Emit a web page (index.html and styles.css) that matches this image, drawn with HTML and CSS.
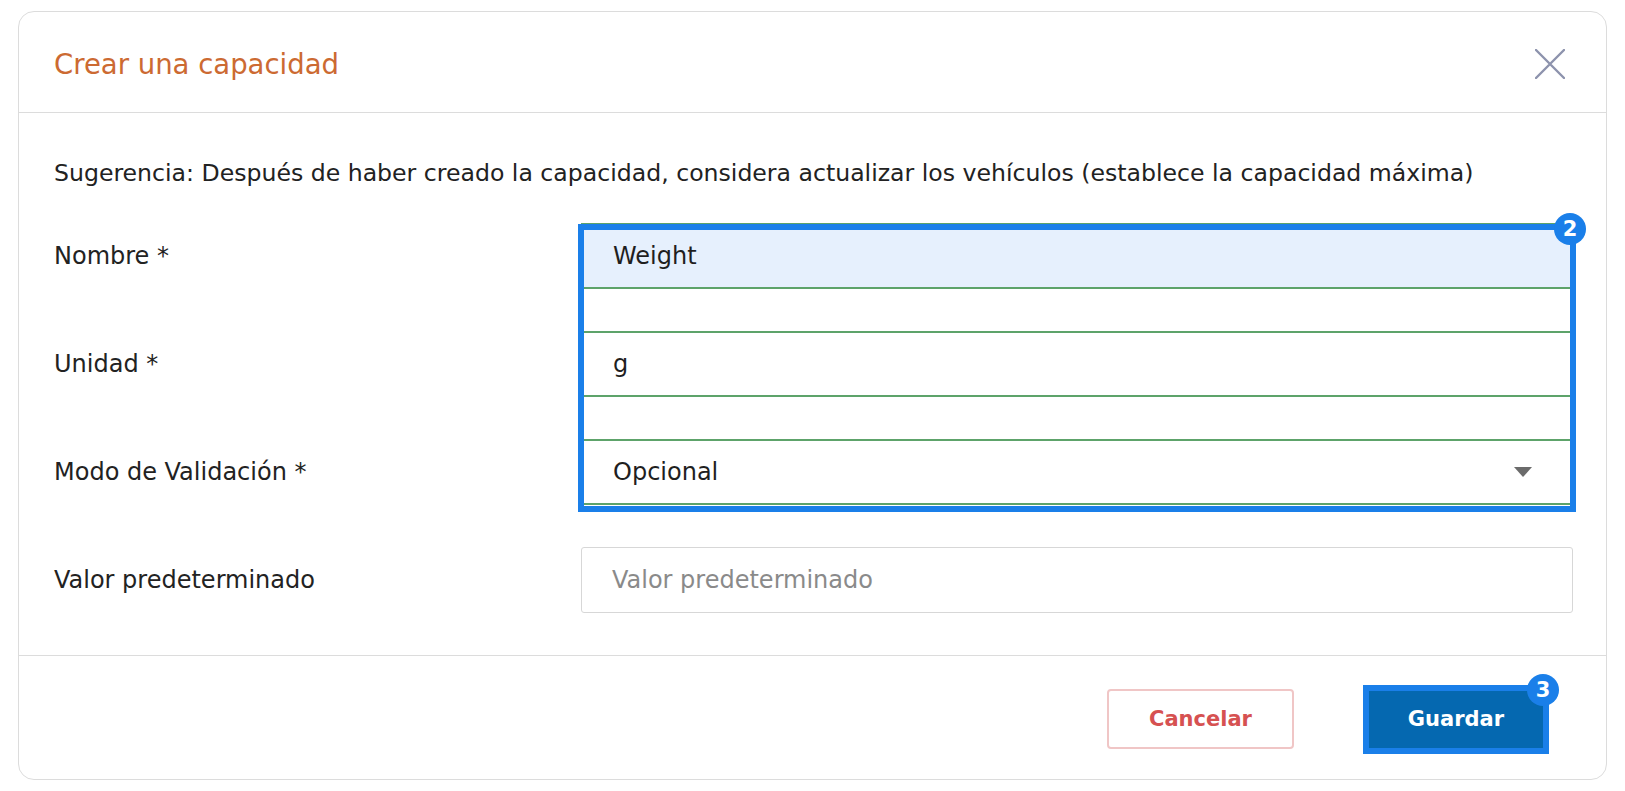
FILE: index.html
```html
<!DOCTYPE html>
<html lang="es">
<head>
<meta charset="utf-8">
<title>Crear una capacidad</title>
<link rel="stylesheet" href="styles.css">
</head>
<body>
<div class="page">
  <div class="dialog">
    <div class="dialog-header">
      <h2 class="dialog-title">Crear una capacidad</h2>
      <button class="close-btn" type="button" aria-label="Cerrar">
        <svg width="30" height="30" viewBox="0 0 30 30"><path d="M1 1 L29 29 M29 1 L1 29" stroke="#8d93ad" stroke-width="2.4" stroke-linecap="round" fill="none"/></svg>
      </button>
    </div>
    <div class="dialog-body">
      <p class="hint">Sugerencia: Después de haber creado la capacidad, considera actualizar los vehículos (establece la capacidad máxima)</p>
      <div class="form">
        <div class="labels">
          <div class="label">Nombre *</div>
          <div class="label">Unidad *</div>
          <div class="label">Modo de Validación *</div>
          <div class="label">Valor predeterminado</div>
        </div>
        <div class="controls">
          <div class="group">
            <div class="field field-filled">Weight</div>
            <div class="field">g</div>
            <div class="field field-select">
              <span>Opcional</span>
              <svg class="caret" width="18" height="10" viewBox="0 0 18 10"><path d="M0 0 L18 0 L9 10 Z" fill="#6b6b6b"/></svg>
            </div>
            <div class="annot annot-fields"><span class="badge">2</span></div>
          </div>
          <div class="field field-plain">Valor predeterminado</div>
        </div>
      </div>
    </div>
    <div class="dialog-footer">
      <button class="btn btn-cancel" type="button">Cancelar</button>
      <div class="btn-wrap">
        <button class="btn btn-save" type="button">Guardar</button>
        <div class="annot annot-btn"><span class="badge">3</span></div>
      </div>
    </div>
  </div>
</div>
</body>
</html>
```

FILE: styles.css
```css
* { box-sizing: border-box; }
html, body { margin: 0; padding: 0; background: #ffffff; }
body {
  font-family: "DejaVu Sans", "Liberation Sans", sans-serif;
  color: #222222;
}
.page { padding: 11px 18px 0 18px; }
.dialog {
  border: 1px solid #dcdcdc;
  border-radius: 16px;
  background: #ffffff;
}
.dialog-header {
  height: 101px;
  border-bottom: 1px solid #dcdcdc;
  display: flex;
  align-items: center;
  justify-content: space-between;
  padding: 3px 41px 0 35px;
}
.dialog-title {
  margin: 0;
  font-size: 27.5px;
  font-weight: normal;
  color: #cc6a32;
}
.close-btn {
  border: 0;
  background: none;
  padding: 0;
  width: 30px;
  height: 30px;
  display: flex;
}
.dialog-body { padding: 42px 33px 42px 35px; }
.hint {
  margin: 0 0 32px 0;
  font-size: 23.6px;
  line-height: 36px;
}
.form { display: grid; grid-template-columns: 527px 1fr; }
.labels { display: flex; flex-direction: column; gap: 42px; }
.label {
  height: 66px;
  display: flex;
  align-items: center;
  font-size: 24px;
}
.controls { display: flex; flex-direction: column; gap: 42px; }
.group { position: relative; display: flex; flex-direction: column; gap: 42px; }
.field {
  height: 66px;
  border: 2px solid #5da36a;
  display: flex;
  align-items: center;
  padding: 0 39px 0 30px;
  font-size: 24px;
  color: #1f1f1f;
  background: #ffffff;
}
.field-filled { background: #e6f0fd; }
.field-select { justify-content: space-between; }
.field-plain {
  border: 1.5px solid #d7d7d7;
  border-radius: 3px;
  color: #8a8a8a;
}
.annot {
  position: absolute;
  border: 6px solid #1a7fe9;
  pointer-events: none;
  z-index: 2;
}
.annot-fields { top: 1px; left: -3px; right: -3px; bottom: -7px; }
.annot-btn { top: -4px; left: -3px; right: -3px; bottom: -5px; }
.badge {
  position: absolute;
  top: -17px;
  right: -16px;
  width: 32px;
  height: 32px;
  border-radius: 50%;
  background: #1a7fe9;
  color: #ffffff;
  font-size: 21px;
  font-weight: bold;
  display: flex;
  align-items: center;
  justify-content: center;
}
.dialog-footer {
  border-top: 1px solid #dcdcdc;
  padding: 33px 60px 30px 0;
  display: flex;
  justify-content: flex-end;
  align-items: center;
  gap: 72px;
}
.btn {
  height: 60px;
  font-family: "DejaVu Sans", "Liberation Sans", sans-serif;
  font-size: 21px;
  font-weight: bold;
  border-radius: 4px;
  cursor: pointer;
}
.btn-cancel {
  width: 187px;
  background: #ffffff;
  border: 2px solid #f0c6c6;
  color: #d65151;
}
.btn-wrap { position: relative; display: flex; }
.btn-save {
  width: 180px;
  background: #0568b0;
  border: 0;
  color: #ffffff;
}
```
